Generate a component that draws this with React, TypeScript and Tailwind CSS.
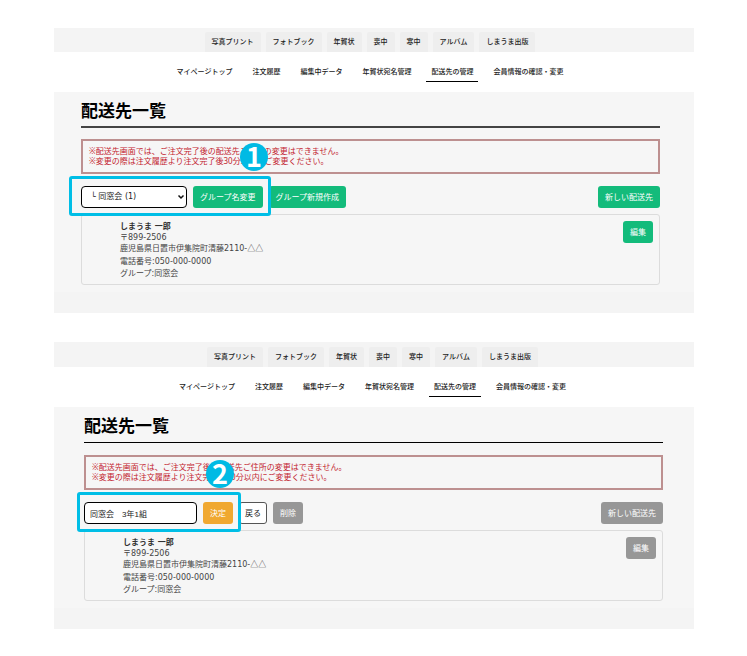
import { useState } from "react";
import type { ReactNode } from "react";
import clsx from "clsx";

const products = ["写真プリント", "フォトブック", "年賀状", "喪中", "寒中", "アルバム", "しまうま出版"];

const menus = [
  "マイページトップ",
  "注文履歴",
  "編集中データ",
  "年賀状宛名管理",
  "配送先の管理",
  "会員情報の確認・変更",
];

const tones = {
  green: "bg-[#13bb7b] text-white",
  orange: "bg-[#f0a830] text-white",
  gray: "bg-[#979797] text-white",
  plain: "border border-[#555] bg-white text-[#222]",
};

type ButtonProps = {
  tone: keyof typeof tones;
  className?: string;
  children: ReactNode;
};

function Button({ tone, className, children }: ButtonProps) {
  return (
    <button
      type="button"
      className={clsx(
        "flex h-[22px] shrink-0 items-center justify-center rounded-[3px] text-[8px] leading-3 whitespace-nowrap",
        tones[tone],
        className ?? "px-[7px]"
      )}
    >
      {children}
    </button>
  );
}

type MarkerProps = {
  step: number;
  frame: string;
  badge: string;
};

// blue frame and numbered badge drawn over the controls
function Marker({ step, frame, badge }: MarkerProps) {
  return (
    <>
      <span
        className={clsx(
          "pointer-events-none absolute z-10 rounded-[3px] border-3 border-[#00bee6]",
          frame
        )}
      />
      <span
        className={clsx(
          "pointer-events-none absolute z-20 flex size-7 items-center justify-center rounded-full bg-[#00bae4] pb-1 font-['Noto_Sans_CJK_JP',sans-serif] text-[27px] leading-none font-bold text-white",
          badge
        )}
      >
        {step}
      </span>
    </>
  );
}

type ScreenProps = {
  headerClass: string;
  menuClass: string;
  bodyClass: string;
  titleClass: string;
  tone: "green" | "gray";
  toolbar: ReactNode;
};

function Screen({ headerClass, menuClass, bodyClass, titleClass, tone, toolbar }: ScreenProps) {
  return (
    <section className="bg-[#f4f4f4]">
      <nav className={clsx("flex items-end justify-center gap-[5px]", headerClass)}>
        {products.map((name) => (
          <a
            key={name}
            href="#"
            className="rounded-t-xs bg-[#eeeeee] px-[7px] py-1 text-[7px] leading-3 font-medium whitespace-nowrap text-[#222]"
          >
            {name}
          </a>
        ))}
      </nav>
      <nav className={clsx("flex h-10 items-center justify-center gap-[10px] bg-white pt-1", menuClass)}>
        {menus.map((name) => (
          <a
            key={name}
            href="#"
            className={clsx(
              "border-b px-[5px] pb-[3px] text-[7px] leading-3 font-medium whitespace-nowrap text-[#222]",
              name === "配送先の管理" ? "border-black" : "border-transparent"
            )}
          >
            {name}
          </a>
        ))}
      </nav>
      <div className={clsx("bg-[#f6f6f6] pt-[7px] pb-[7px]", bodyClass)}>
        <h1 className={clsx("text-[17px] leading-6 font-bold text-black", titleClass)}>
          配送先一覧
        </h1>
        <p className="border-2 border-[#bd9090] px-[6px] pt-[5px] pb-[6px] text-[8px] leading-[10px] text-[#c32430]">
          ※配送先画面では、ご注文完了後の配送先ご住所の変更はできません。
          <br />
          ※変更の際は注文履歴より注文完了後30分以内にご変更ください。
        </p>
        <div className="mt-3 flex items-center gap-[6px]">
          {toolbar}
          <Button tone={tone} className="ml-auto px-[7px]">
            新しい配送先
          </Button>
        </div>
        <article className="mt-[6px] flex items-start justify-between rounded-[3px] border border-[#dcdcdc] pt-[6px] pr-[6px] pb-1 pl-[38px] text-[8px] leading-[10px] text-[#444]">
          <div className="font-['DejaVu_Sans','Noto_Sans_CJK_JP',sans-serif]">
            <h2 className="leading-3 font-bold text-[#333]">しまうま 一郎</h2>
            <p>〒899-2506</p>
            <p>
              鹿児島県日置市伊集院町清藤2110-
              <span className="font-['Noto_Sans_CJK_JP',sans-serif]">△△</span>
            </p>
            <p className="mt-[2px] leading-3">電話番号:050-000-0000</p>
            <p className="leading-3">グループ:同窓会</p>
          </div>
          <Button tone={tone}>編集</Button>
        </article>
      </div>
      <div className="h-[21px]" />
    </section>
  );
}

function SelectToolbar() {
  return (
    <>
      <div className="relative flex gap-[6px]">
        <div className="relative flex">
          <select
            aria-label="グループ"
            className="h-[22px] w-[106px] appearance-none rounded-[4px] border border-black bg-white pl-[9px] font-['DejaVu_Sans','Noto_Sans_CJK_JP',sans-serif] text-[8px] text-[#222]"
          >
            <option>└ 同窓会 (1)</option>
          </select>
          <svg
            viewBox="0 0 8 6"
            className="pointer-events-none absolute top-2 right-[2px] h-[6px] w-2"
            fill="none"
            stroke="#111"
            strokeWidth="1.5"
          >
            <path d="M1.5 1.5 4 4l2.500-2.500" />
          </svg>
        </div>
        <Button tone="green">グループ名変更</Button>
        <Marker
          step={1}
          frame="-top-[10px] -right-2 -bottom-2 -left-3"
          badge="-top-[43px] left-[159px]"
        />
      </div>
      <Button tone="green">グループ新規作成</Button>
    </>
  );
}

function EditToolbar() {
  const [name, setName] = useState("同窓会　3年1組");

  return (
    <>
      <div className="relative flex gap-[6px]">
        <input
          type="text"
          aria-label="グループ名"
          value={name}
          onChange={(e) => setName(e.target.value)}
          className="h-[22px] w-[113px] rounded-[4px] border border-black bg-white px-[5px] font-['Liberation_Sans','Noto_Sans_CJK_JP',sans-serif] text-[8px] text-[#222]"
        />
        <Button tone="orange">決定</Button>
        <Marker
          step={2}
          frame="-top-[10px] -right-2 -bottom-2 -left-[7px]"
          badge="-top-[42px] left-[122px]"
        />
      </div>
      <Button tone="plain" className="px-[5px]">
        戻る
      </Button>
      <Button tone="gray">削除</Button>
    </>
  );
}

export default function App() {
  return (
    <main
      lang="ja"
      className="flex flex-col gap-[29px] bg-white py-7 pr-[53px] pl-[54px] font-['Noto_Sans','Noto_Sans_CJK_JP',sans-serif]"
    >
      <Screen
        headerClass="pt-1 pr-2"
        menuClass="pr-2"
        bodyClass="pr-[34px] pl-[27px]"
        titleClass="mb-[11px] border-b-2 border-[#444] pb-[3px]"
        tone="green"
        toolbar={<SelectToolbar />}
      />
      <Screen
        headerClass="pt-[5px] pr-[3px]"
        menuClass="pr-[3px]"
        bodyClass="pr-[31px] pl-[30px]"
        titleClass="mb-3 border-b border-black pb-1"
        tone="gray"
        toolbar={<EditToolbar />}
      />
    </main>
  );
}
